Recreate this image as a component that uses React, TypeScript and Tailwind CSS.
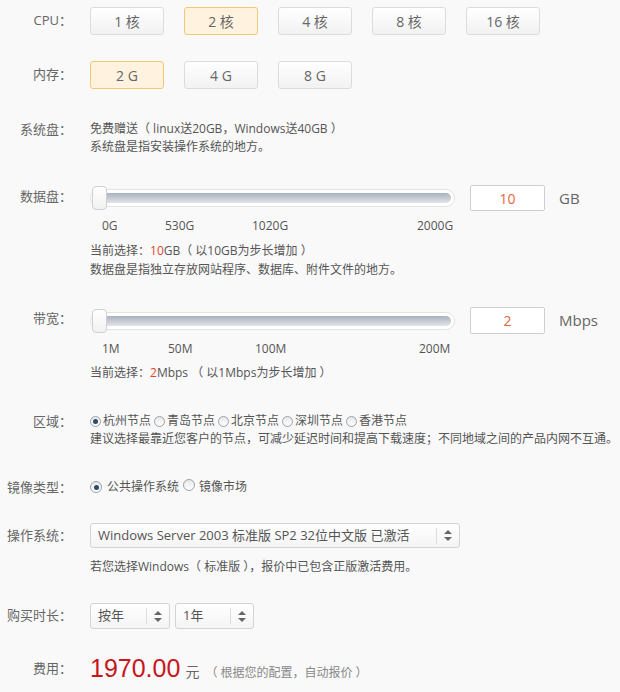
import React, { useState } from 'react';

const font = { fontFamily: '"Open Sans", "Noto Sans CJK SC", sans-serif' };

const Label: React.FC<{ children: React.ReactNode; className?: string }> = ({ children, className }) => (
  <div className={`w-[72px] shrink-0 text-right text-[13px] text-[#666] ${className ?? ''}`}>{children}</div>
);

const OptionButton: React.FC<{ active?: boolean; children: React.ReactNode; onClick?: () => void }> = ({ active, children, onClick }) => (
  <button
    onClick={onClick}
    className={
      active
        ? 'w-[74px] h-[28px] rounded-[3px] border border-[#f1c874] bg-[#fff3df] text-[14px] text-[#666]'
        : 'w-[74px] h-[28px] rounded-[3px] border border-[#dcdcdc] bg-gradient-to-b from-white to-[#f2f2f2] text-[14px] text-[#666]'
    }
  >
    {children}
  </button>
);

const Arrows = () => (
  <svg width="8" height="11" viewBox="0 0 8 11">
    <path d="M4 0 L8 4 H0 Z" fill="#666" />
    <path d="M4 11 L8 7 H0 Z" fill="#666" />
  </svg>
);

const SelectBox: React.FC<{ width: string; children: React.ReactNode; h: string }> = ({ width, children, h }) => (
  <div className={`${width} ${h} flex items-center rounded-[3px] border border-[#d4d4d4] bg-gradient-to-b from-white to-[#f4f4f4] text-[13px] text-[#555]`}>
    <div className="flex-1 pl-[7px] whitespace-nowrap">{children}</div>
    <div className="h-[16px] w-px bg-[#ddd]" />
    <div className="w-[22px] flex justify-center">
      <Arrows />
    </div>
  </div>
);

const Slider = () => (
  <div className="relative w-[365px] h-[18px] rounded-full border border-[#e3e3e3] bg-white p-[3px]">
    <div className="h-full w-full rounded-full bg-gradient-to-b from-[#a9b2be] to-[#e2e5ea]" />
    <div className="absolute left-[1px] top-[-4px] w-[15px] h-[24px] rounded-[4px] border border-[#d0d0d0] bg-gradient-to-b from-white to-[#f1f1f1]" />
  </div>
);

const Radio: React.FC<{ checked?: boolean; size?: string }> = ({ checked, size = 'w-[11px] h-[11px]' }) => (
  <span className={`${size} inline-flex items-center justify-center rounded-full border border-[#9aa3ad] bg-gradient-to-b from-[#e8e8e8] to-white shrink-0`}>
    {checked && <span className="w-[5px] h-[5px] rounded-full bg-[#2f4a66]" />}
  </span>
);

export default function App() {
  const [cpu, setCpu] = useState('2 核');
  const [mem, setMem] = useState('2 G');

  return (
    <div className="w-[620px] h-[692px] bg-[#f9f9f9] pt-[7px] overflow-hidden" style={font}>
      {/* CPU */}
      <div className="flex items-center gap-[18px]">
        <Label>CPU：</Label>
        <div className="flex gap-[20px]">
          {['1 核', '2 核', '4 核', '8 核', '16 核'].map(c => (
            <OptionButton key={c} active={cpu === c} onClick={() => setCpu(c)}>{c}</OptionButton>
          ))}
        </div>
      </div>

      {/* 内存 */}
      <div className="flex items-center gap-[18px] mt-[26px]">
        <Label>内存：</Label>
        <div className="flex gap-[20px]">
          {['2 G', '4 G', '8 G'].map(m => (
            <OptionButton key={m} active={mem === m} onClick={() => setMem(m)}>{m}</OptionButton>
          ))}
        </div>
      </div>

      {/* 系统盘 */}
      <div className="flex gap-[18px] mt-[31px] leading-[18px]">
        <Label>系统盘：</Label>
        <div className="text-[12px] text-[#555]">
          <div>免费赠送（ linux送20GB，Windows送40GB ）</div>
          <div>系统盘是指安装操作系统的地方。</div>
        </div>
      </div>

      {/* 数据盘 */}
      <div className="flex gap-[18px] mt-[29px]">
        <Label className="leading-[22px]">数据盘：</Label>
        <div>
          <div className="flex items-center h-[26px]">
            <Slider />
            <div className="ml-[15px] w-[75px] h-[26px] flex items-center justify-center rounded-[2px] border border-[#cfcfcf] bg-white text-[14px] text-[#e8673a]">10</div>
            <div className="ml-[14px] text-[15px] text-[#666]">GB</div>
          </div>
          <div className="flex mt-[6px] pl-[12px] text-[12px] text-[#555] leading-[18px]">
            <span className="w-[63px]">0G</span>
            <span className="w-[87px]">530G</span>
            <span className="w-[165px]">1020G</span>
            <span>2000G</span>
          </div>
          <div className="mt-[6px] text-[12px] text-[#555] leading-[19px]">
            <div>当前选择：<span className="text-[#e8452b]">10</span>GB（ 以10GB为步长增加 ）</div>
            <div>数据盘是指独立存放网站程序、数据库、附件文件的地方。</div>
          </div>
        </div>
      </div>

      {/* 带宽 */}
      <div className="flex gap-[18px] mt-[28px]">
        <Label className="leading-[22px]">带宽：</Label>
        <div>
          <div className="flex items-center h-[27px]">
            <Slider />
            <div className="ml-[15px] w-[75px] h-[27px] flex items-center justify-center rounded-[2px] border border-[#cfcfcf] bg-white text-[14px] text-[#e8673a]">2</div>
            <div className="ml-[14px] text-[15px] text-[#666]">Mbps</div>
          </div>
          <div className="flex mt-[6px] pl-[12px] text-[12px] text-[#555] leading-[18px]">
            <span className="w-[66px]">1M</span>
            <span className="w-[87px]">50M</span>
            <span className="w-[164px]">100M</span>
            <span>200M</span>
          </div>
          <div className="mt-[6px] text-[12px] text-[#555] leading-[18px]">
            当前选择：<span className="text-[#e8452b]">2</span>Mbps （ 以1Mbps为步长增加 ）
          </div>
        </div>
      </div>

      {/* 区域 */}
      <div className="flex gap-[18px] mt-[30px] leading-[18px]">
        <Label>区域：</Label>
        <div className="text-[12px] text-[#555]">
          <div className="flex items-center">
            {['杭州节点', '青岛节点', '北京节点', '深圳节点', '香港节点'].map((r, i) => (
              <span key={r} className="inline-flex items-center gap-[2px] mr-[3px]">
                <Radio checked={i === 0} />
                {r}
              </span>
            ))}
          </div>
          <div className="whitespace-nowrap">建议选择最靠近您客户的节点，可减少延迟时间和提高下载速度；不同地域之间的产品内网不互通。</div>
        </div>
      </div>

      {/* 镜像类型 */}
      <div className="flex items-center gap-[18px] mt-[30px] leading-[18px]">
        <Label>镜像类型：</Label>
        <div className="flex items-center text-[12px] text-[#555]">
          <Radio checked size="w-[12px] h-[12px]" />
          <span className="ml-[5px]">公共操作系统</span>
          <span className="ml-[4px]"><Radio size="w-[12px] h-[12px]" /></span>
          <span className="ml-[4px]">镜像市场</span>
        </div>
      </div>

      {/* 操作系统 */}
      <div className="flex gap-[18px] mt-[27px]">
        <Label className="leading-[24px]">操作系统：</Label>
        <div>
          <SelectBox width="w-[370px]" h="h-[25px]">Windows Server 2003 标准版 SP2 32位中文版 已激活</SelectBox>
          <div className="mt-[10px] text-[12px] text-[#555] leading-[18px]">若您选择Windows（ 标准版 ），报价中已包含正版激活费用。</div>
        </div>
      </div>

      {/* 购买时长 */}
      <div className="flex items-center gap-[18px] mt-[27px]">
        <Label>购买时长：</Label>
        <div className="flex gap-[5px]">
          <SelectBox width="w-[80px]" h="h-[26px]">按年</SelectBox>
          <SelectBox width="w-[79px]" h="h-[26px]">1年</SelectBox>
        </div>
      </div>

      {/* 费用 */}
      <div className="flex items-center gap-[18px] mt-[25px] h-[30px]">
        <Label>费用：</Label>
        <div className="flex items-baseline">
          <span className="text-[25px] text-[#c8161d]" style={{ fontFamily: '"Liberation Sans", Arial, sans-serif' }}>1970.00</span>
          <span className="ml-[5px] text-[14px] text-[#666]">元</span>
          <span className="ml-[6px] text-[12px] text-[#888]">（ 根据您的配置，自动报价 ）</span>
        </div>
      </div>
    </div>
  );
}
